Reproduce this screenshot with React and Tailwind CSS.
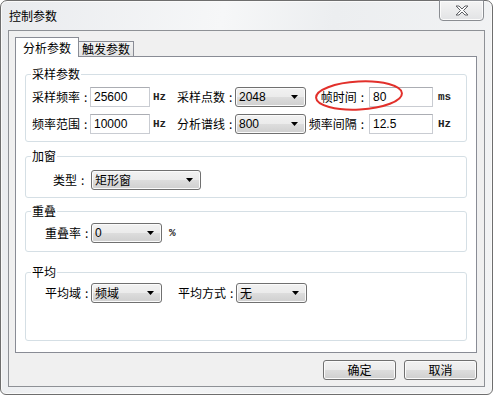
import React from 'react';

const btnBg = 'bg-[linear-gradient(#f2f2f2_0%,#ebebeb_50%,#dddddd_51%,#cfcfcf_100%)]';

const Label = ({ text, className = '' }) => (
  <span className={`shrink-0 whitespace-nowrap ${className}`}>
    {text}
    <span className="ml-[4px]">:</span>
  </span>
);

const Field = ({ value, w }) => (
  <div className={`${w} h-[20px] shrink-0 flex items-center border border-[#c9ccd2] border-t-[#abadb3] bg-white pl-[3px] font-['Liberation_Sans',sans-serif] text-[12px]`}>
    {value}
  </div>
);

const Combo = ({ value, w, latin }) => (
  <div
    className={`${w} h-[20px] shrink-0 flex items-center justify-between rounded-[3px] border border-[#707070] ${btnBg} shadow-[inset_0_0_0_1px_#fbfbfb] pl-[3px] pr-[7px] ${
      latin ? "font-['Liberation_Sans',sans-serif]" : ''
    }`}
  >
    <span>{value}</span>
    <svg width="7" height="4" viewBox="0 0 7 4">
      <path d="M0 0h7L3.5 4z" fill="#000" />
    </svg>
  </div>
);

const Unit = ({ children, className = '' }) => (
  <span className={`shrink-0 font-['Liberation_Mono',monospace] text-[11px] font-bold text-[#222] ${className}`}>{children}</span>
);

const Group = ({ title, className = '', children }) => (
  <fieldset className={`mx-[9px] rounded-[3px] border border-[#d5dfe5] p-0 ${className}`}>
    <legend className="ml-[5px] px-[1px] leading-[16px]">{title}</legend>
    {children}
  </fieldset>
);

export default function App() {
  return (
    <div className="relative w-[493px] h-[395px] bg-white font-['Noto_Sans_CJK_SC',sans-serif] text-[12px] leading-[16px] text-black">
      <div className="flex h-full w-full flex-col rounded-t-[7px] rounded-b-[6px] border border-[#6e6e6e] bg-[linear-gradient(100deg,#e9ebee_0%,#f6f7f8_40%,#eceef0_60%,#f3f4f5_100%)] shadow-[inset_0_0_0_1px_#fafafa]">
        {/* title bar */}
        <div className="flex h-[29px] shrink-0 items-start justify-between">
          <span className="ml-[8px] mt-[7px]">控制参数</span>
          <div className="mr-[8px] -mt-px flex h-[21px] w-[45px] items-center justify-center rounded-b-[4px] border border-[#8a8d92] bg-[linear-gradient(#f4f4f4,#e2e3e5)] shadow-[inset_0_0_0_1px_#fbfbfb]">
            <svg width="14" height="11" viewBox="0 0 14 11">
              <path
                d="M1 1h3l3 3 3-3h3l-4.5 4.5L13 10h-3L7 7l-3 3H1l4.5-4.5z"
                fill="#fff"
                stroke="#5e6065"
                strokeWidth="1"
                strokeLinejoin="round"
              />
            </svg>
          </div>
        </div>

        {/* client area */}
        <div className="mx-[7px] flex h-[357px] flex-col border border-[#8e9196] bg-[#f0f0f0] pl-[6px] pr-[7px] pt-[6px]">
          {/* tabs */}
          <div className="flex h-[19px] items-end">
            <div className="relative z-10 -mb-px flex h-[20px] w-[64px] items-center justify-center border border-b-0 border-[#898c95] bg-white">
              分析参数
            </div>
            <div className="flex h-[15px] w-[55px] items-center justify-center border border-l-0 border-b-0 border-[#898c95] bg-[linear-gradient(#f3f3f3,#e3e3e3)]">
              触发参数
            </div>
          </div>

          {/* panel */}
          <div className="flex h-[297px] flex-col border border-[#898c95] bg-white">
            <Group title="采样参数" className="mt-[9px]">
              <div className="flex flex-col gap-[7px] pb-[7px] pl-[6px] pt-[5px]">
                <div className="flex h-[20px] items-center">
                  <Label text="采样频率" className="w-[58px]" />
                  <Field value="25600" w="w-[60px]" />
                  <Unit className="w-[27px] pl-[3px]">Hz</Unit>
                  <Label text="采样点数" className="w-[58px]" />
                  <Combo value="2048" w="w-[71px]" latin />
                  <span className="w-[63px] shrink-0 pr-[5px] text-right">
                    帧时间<span className="ml-[4px]">:</span>
                  </span>
                  <Field value="80" w="w-[64px]" />
                  <Unit className="pl-[5px]">ms</Unit>
                </div>
                <div className="flex h-[20px] items-center">
                  <Label text="频率范围" className="w-[58px]" />
                  <Field value="10000" w="w-[60px]" />
                  <Unit className="w-[27px] pl-[3px]">Hz</Unit>
                  <Label text="分析谱线" className="w-[58px]" />
                  <Combo value="800" w="w-[71px]" latin />
                  <span className="w-[63px] shrink-0 pr-[5px] text-right">
                    频率间隔<span className="ml-[4px]">:</span>
                  </span>
                  <Field value="12.5" w="w-[64px]" />
                  <Unit className="pl-[5px]">Hz</Unit>
                </div>
              </div>
            </Group>

            <Group title="加窗" className="mt-[6px]">
              <div className="flex h-[20px] items-center pl-[27px] mt-[6px] mb-[7px]">
                <Label text="类型" className="w-[38px]" />
                <Combo value="矩形窗" w="w-[110px]" />
              </div>
            </Group>

            <Group title="重叠" className="mt-[5px]">
              <div className="flex h-[20px] items-center pl-[19px] mt-[4px] mb-[8px]">
                <Label text="重叠率" className="w-[46px]" />
                <Combo value="0" w="w-[71px]" latin />
                <Unit className="pl-[7px]">%</Unit>
              </div>
            </Group>

            <Group title="平均" className="mt-[12px]">
              <div className="flex h-[20px] items-center pl-[19px] mt-[3px] mb-[37px]">
                <Label text="平均域" className="w-[46px]" />
                <Combo value="频域" w="w-[71px]" />
                <Label text="平均方式" className="ml-[16px] w-[58px]" />
                <Combo value="无" w="w-[71px]" />
              </div>
            </Group>
          </div>

          {/* buttons */}
          <div className="mt-[7px] flex justify-end gap-[8px]">
            <button className={`h-[20px] w-[73px] rounded-[3px] border border-[#707070] ${btnBg} shadow-[inset_0_0_0_1px_#fbfbfb] text-[12px] leading-[16px]`}>
              确定
            </button>
            <button className={`h-[20px] w-[73px] rounded-[3px] border border-[#707070] ${btnBg} shadow-[inset_0_0_0_1px_#fbfbfb] text-[12px] leading-[16px]`}>
              取消
            </button>
          </div>
        </div>
      </div>

      {/* hand-drawn highlight */}
      <svg className="absolute left-[313px] top-[79px]" width="92" height="33" viewBox="0 0 92 33">
        <ellipse cx="46" cy="16.5" rx="43" ry="14" fill="none" stroke="#e2302b" strokeWidth="2" transform="rotate(-3 46 16.5)" />
      </svg>
    </div>
  );
}
